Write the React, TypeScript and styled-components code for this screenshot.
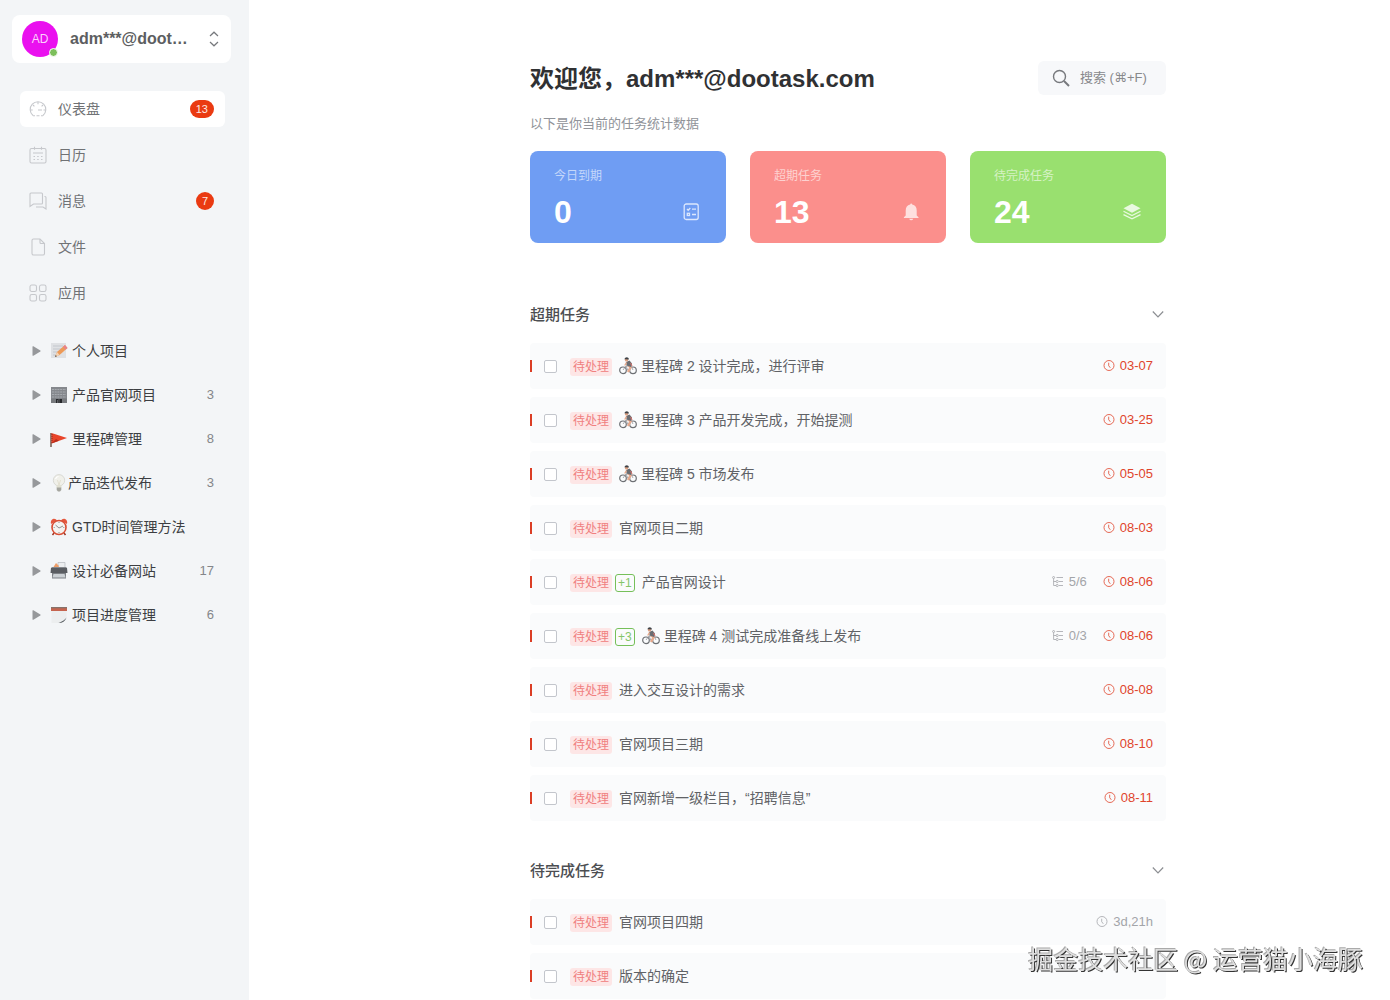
import React, { useState } from "react";
import styled, { createGlobalStyle } from "styled-components";

const Global = createGlobalStyle`
  * { box-sizing: border-box; }
  body {
    margin: 0;
    background: #fff;
    font-family: "Liberation Sans", "Noto Sans CJK SC", sans-serif;
    font-size: 14px;
    color: #606266;
  }
  button {
    font: inherit;
    color: inherit;
    border: 0;
    margin: 0;
    padding: 0;
    background: none;
    cursor: pointer;
    text-align: left;
  }
  a { color: inherit; text-decoration: none; }
  h1, h2, p, ul { margin: 0; padding: 0; }
  li { list-style: none; }
  svg { display: block; flex: none; }
`;

const Page = styled.div`
  display: flex;
  height: 100vh;
  overflow: hidden;
`;

const Sidebar = styled.aside`
  width: 249px;
  flex: none;
  background: #f3f5f7;
  overflow: hidden;
`;

const UserCard = styled.button`
  display: flex;
  align-items: center;
  width: 219px;
  height: 48px;
  margin: 15px 0 0 12px;
  padding: 0 12px 0 10px;
  border-radius: 8px;
  background: #fff;
`;

const Avatar = styled.span`
  position: relative;
  flex: none;
  width: 36px;
  height: 36px;
  border-radius: 50%;
  background: #ea10ef;
  color: #fbd0fc;
  font-size: 12px;
  line-height: 36px;
  text-align: center;
`;

const OnlineDot = styled.span`
  position: absolute;
  right: 0;
  bottom: 0;
  width: 9px;
  height: 9px;
  border: 1px solid #fff;
  border-radius: 50%;
  background: #7cbf5b;
`;

const UserName = styled.span`
  flex: 1;
  min-width: 0;
  margin: 0 20px 0 12px;
  font-size: 16px;
  line-height: 24px;
  font-weight: 700;
  color: #5c5e61;
  white-space: nowrap;
  overflow: hidden;
  text-overflow: ellipsis;
`;

const Menu = styled.ul`
  display: flex;
  flex-direction: column;
  gap: 10px;
  padding: 28px 24px 0 20px;
`;

const MenuLink = styled.a<{ $active?: boolean }>`
  display: flex;
  align-items: center;
  gap: 11px;
  height: 36px;
  padding: 0 11px 0 9px;
  border-radius: 6px;
  background: ${(p) => (p.$active ? "#fff" : "transparent")};
  color: #707275;
`;

const MenuLabel = styled.span`
  flex: 1;
  line-height: 20px;
`;

const Badge = styled.span`
  min-width: 18px;
  height: 18px;
  padding: 0 6px;
  border-radius: 9px;
  background: #ea3a12;
  color: #fde9e4;
  font-size: 11px;
  line-height: 18px;
  text-align: center;
`;

const Projects = styled.ul`
  padding: 18px 35px 0 32px;
`;

const ProjectButton = styled.button`
  display: flex;
  align-items: center;
  width: 100%;
  height: 44px;
  line-height: 20px;
  color: #3c3e42;
`;

const ProjectIcon = styled.span<{ $narrow?: boolean }>`
  width: ${(p) => (p.$narrow ? 18 : 22)}px;
  margin-left: 9px;
`;

const ProjectCount = styled.span`
  margin-left: auto;
  font-size: 13px;
  color: #84868a;
`;

const Main = styled.main`
  flex: 1;
  min-width: 0;
  display: grid;
  grid-template-columns: 281fr minmax(auto, 636px) 224fr;
  overflow: hidden;
`;

const Content = styled.div`
  grid-column: 2;
  padding-top: 61px;
`;

const Header = styled.header`
  display: flex;
  align-items: center;
  justify-content: space-between;
  height: 34px;
`;

const Title = styled.h1`
  font-size: 24px;
  line-height: 34px;
  padding-top: 2px;
  font-weight: 700;
  color: #303133;
`;

const SearchButton = styled.button`
  display: flex;
  align-items: center;
  gap: 10px;
  min-width: 128px;
  height: 34px;
  padding: 0 16px 0 14px;
  border-radius: 6px;
  background: #f7f8fa;
  font-family: "Liberation Sans", "DejaVu Sans", "Noto Sans CJK SC", sans-serif;
  font-size: 13px;
  line-height: 20px;
  color: #88898c;
`;

const Subtitle = styled.p`
  margin-top: 19px;
  font-size: 13px;
  line-height: 20px;
  color: #909399;
`;

const Stats = styled.div`
  display: grid;
  grid-template-columns: repeat(3, 1fr);
  gap: 24px;
  margin-top: 17px;
`;

const StatCard = styled.button<{ $color: string }>`
  display: flex;
  flex-direction: column;
  height: 92px;
  padding: 15px 25px 0 24px;
  border-radius: 8px;
  background: ${(p) => p.$color};
`;

const StatLabel = styled.span`
  font-size: 12px;
  line-height: 20px;
  color: rgba(255, 255, 255, 0.6);
`;

const StatRow = styled.span`
  display: flex;
  align-items: center;
  justify-content: space-between;
  width: 100%;
  margin-top: 8px;
`;

const StatValue = styled.strong`
  font-size: 32px;
  line-height: 36px;
  font-weight: 700;
  color: #fff;
`;

const Section = styled.section<{ $first?: boolean }>`
  margin-top: ${(p) => (p.$first ? 60 : 38)}px;
`;

const SectionHead = styled.button`
  display: flex;
  align-items: center;
  justify-content: space-between;
  width: 100%;
  height: 24px;
  padding-right: 2px;
`;

const SectionTitle = styled.span`
  font-size: 15px;
  line-height: 24px;
  font-weight: 500;
  color: #4c4e52;
`;

const TaskList = styled.ul`
  display: flex;
  flex-direction: column;
  gap: 8px;
  margin-top: 16px;
`;

const Task = styled.li`
  display: flex;
  align-items: center;
  height: 46px;
  padding-right: 13px;
  border-radius: 4px;
  background: #fafbfc;
`;

const Priority = styled.span`
  width: 2px;
  height: 12px;
  margin-right: 12px;
  background: #db3e25;
`;

const Check = styled.input`
  appearance: none;
  width: 13px;
  height: 13px;
  margin: 0 13px 0 0;
  border: 1px solid #c3c6cc;
  border-radius: 2px;
  background: #fff;
  &:checked { background: #84c56a; }
`;

const Status = styled.span`
  height: 18px;
  margin-top: 2px;
  padding: 0 3px;
  border-radius: 3px;
  background: #fde6e6;
  color: #f08080;
  font-size: 12px;
  line-height: 18px;
`;

const SubCount = styled.span`
  height: 18px;
  margin: 2px 0 0 3px;
  padding: 0 2px;
  border: 1px solid #76c05a;
  border-radius: 3px;
  color: #84c56a;
  font-size: 12px;
  line-height: 16px;
`;

const TaskName = styled.label`
  display: flex;
  align-items: center;
  gap: 4px;
  flex: 1;
  min-width: 0;
  margin-left: 7px;
  line-height: 20px;
  color: #606266;
`;

const Meta = styled.span<{ $late?: boolean }>`
  display: flex;
  align-items: center;
  gap: 5px;
  margin-left: 16px;
  font-size: 13px;
  line-height: 20px;
  color: ${(p) => (p.$late ? "#e0452c" : "#a3a5a9")};
`;

const Watermark = styled.div`
  position: fixed;
  right: 27px;
  bottom: 24px;
  font-family: "Noto Sans CJK SC", sans-serif;
  font-size: 25px;
  line-height: 36px;
  color: #dedede;
  text-shadow: 1px 1px 0 #333, -1px -1px 0 #aaa;
  pointer-events: none;
`;

const navIcons: Record<string, React.ReactNode> = {
  dash: (
    <>
      <path d="M4 15.5A7.8 7.8 0 1 1 14 15.5" />
      <path d="M4 15.8h2M7.5 15.8h3M12 15.8h2" />
      <path d="M9 10h4M9 2v2.2M4 5l1.4 1.4M14 5l-1.4 1.4M1.500 10h2.200M14.500 10h2" />
    </>
  ),
  calendar: (
    <>
      <rect x="1" y="2.5" width="16" height="14.5" rx="1.5" />
      <path d="M5.5 .8v3M12.5 .8v3M4 7h10" />
      <path d="M4.5 10.5H6M8.2 10.5h1.5M12 10.5h1.5M4.5 13.5H6M8.200 13.5h1.5M12 13.5h1.5" />
    </>
  ),
  chat: (
    <>
      <path d="M2 1h10.500q1 0 1 1v9q0 1-1 1H4.500L1 14.500V2q0-1 1-1z" />
      <path d="M15.5 4.500H16q1 0 1 1v11.500l-3-2H7" />
    </>
  ),
  file: (
    <>
      <path d="M4.500 1h6.500L15.500 5.500v10q0 1.500-1.500 1.500H4.500Q3 17 3 15.500v-13Q3 1 4.500 1z" />
      <path d="M11 1v3.500q0 1 1 1h3.500" />
    </>
  ),
  apps: (
    <>
      <rect x="1" y="1" width="6.500" height="6.500" rx="1.800" />
      <rect x="10.500" y="1" width="6.500" height="6.500" rx="1.800" />
      <rect x="1" y="10.500" width="6.500" height="6.500" rx="1.800" />
      <rect x="10.500" y="10.500" width="6.500" height="6.500" rx="1.800" />
    </>
  ),
};

const NavIcon = ({ name }: { name: string }) => (
  <svg width="18" height="18" viewBox="0 0 18 18" fill="none" stroke="#c6c8cc" strokeWidth="1.1">
    {navIcons[name]}
  </svg>
);

const emojis: Record<string, React.ReactNode> = {
  memo: (
    <>
      <path d="M1 1h15v15H1z" fill="#dfe1e4" />
      <path d="M3 4h10M3 7h9M3 10h5M3 13h4" stroke="#c3c7cd" />
      <path d="M5 15l2-5 8-7 2.5 3-8 7z" fill="#ed9a58" />
      <path d="M13 4.5l2-1.5 2.5 3-2 1.7z" fill="#e8838b" />
      <path d="M5 15l2-5 2.5 3z" fill="#f4d4b4" />
      <path d="M5 15l.8-2 1 1.2z" fill="#444" />
    </>
  ),
  office: (
    <>
      <path d="M1 1h16v16H1z" fill="#85888d" />
      <path d="M2 3.500h14M2 6h14M2 8.500h14M2 11h14" stroke="#a6aaaf" strokeDasharray="2 .7" />
      <path d="M1 12.500h16V17H1z" fill="#777a7e" />
      <path d="M6 13h6v4H6z" fill="#25272a" />
      <path d="M9 13v4M7.500 14v3" stroke="#85888d" strokeWidth=".6" />
    </>
  ),
  flag: (
    <>
      <path d="M1 3v14" stroke="#54301f" strokeWidth="1.2" />
      <path d="M1.5 3L17 8 1.5 13.500z" fill="#e8442a" />
      <path d="M2 4v9" stroke="#8d2d1d" strokeDasharray="1 1" />
      <path d="M1.5 13.500L9 10.800 6 9z" fill="#b72f1c" />
    </>
  ),
  bulb: (
    <>
      <circle cx="9" cy="6.300" r="5.700" fill="#f0f0ea" stroke="#cfcfc8" strokeWidth=".7" />
      <path d="M6.500 11h5v3h-5z" fill="#e1e0d2" />
      <path d="M6.700 13.500h4.600V16L10 17.500H8L6.700 16z" fill="#a5a69f" />
      <path d="M7.500 6L9 11l1.500-5" stroke="#d8d4bd" strokeWidth=".6" fill="none" />
      <path d="M5.500 5q1-2.500 3-2.500" stroke="#fff" strokeWidth="1.200" fill="none" />
    </>
  ),
  clock: (
    <>
      <path d="M4 15l-1.500 2M14 15l1.500 2" stroke="#9b3524" strokeWidth="1.500" />
      <path d="M1 6Q0 2 3.500.8 6 .5 7 2.500zM17 6Q18 2 14.500.8 12 .5 11 2.500z" fill="#e4573d" />
      <circle cx="9" cy="9.500" r="7" fill="#f4f3f0" stroke="#d94f35" strokeWidth="1.600" />
      <path d="M5.500 7L9 10l4-2" stroke="#777" strokeWidth=".8" fill="none" />
      <path d="M9 4v1M9 14v1M3.700 9.500h1M13.300 9.500h1" stroke="#777" strokeWidth=".8" />
    </>
  ),
  printer: (
    <>
      <path d="M8 .5h7v6H8z" fill="#eceef0" stroke="#b4b9be" strokeWidth=".7" />
      <path d="M3.500 5L6 1l3 3-1 2z" fill="#ee9d68" />
      <path d="M1 6h16l.5 5H.5z" fill="#5a5d62" />
      <path d="M1 6h16l-1-1H2z" fill="#85898e" />
      <path d="M2 11h14v5.500H2z" fill="#7d8186" />
      <path d="M3.500 12h11l1 3.500h-13z" fill="#ccd1d5" />
    </>
  ),
  notepad: (
    <>
      <path d="M1.500 1h15v12l-4 4h-11z" fill="#eceeef" />
      <path d="M1 1.500h16v3.500H1z" fill="#c5644f" />
      <path d="M1 1h16v1.300H1z" fill="#85736c" />
      <path d="M16.500 11.500q-2 3-8 5.500 6 0 8-5.500z" fill="#555b60" />
    </>
  ),
};

const Emoji = ({ name }: { name: string }) => (
  <svg width="18" height="18" viewBox="0 0 18 18">
    {emojis[name]}
  </svg>
);

const Cyclist = () => (
  <svg width="18" height="18" viewBox="0 0 18 18" fill="none">
    <circle cx="4" cy="13.300" r="3.300" stroke="#6d7074" strokeWidth="1.200" />
    <circle cx="14" cy="13.300" r="3.300" stroke="#6d7074" strokeWidth="1.200" />
    <path d="M4 13l3-4h5l2 4M7 9l2 4.500L12 9" stroke="#94979a" strokeWidth=".8" />
    <path d="M9 8.500l2.500 2-2.500 4.500" stroke="#e8a98c" strokeWidth="2.200" />
    <path d="M7 5l3.500-1.500 2.500 3-1 3.500-4.500-1.500z" fill="#6a6d72" />
    <path d="M7.500 5.500L5.800 8.500" stroke="#e8a98c" strokeWidth="1.500" />
    <path d="M11.500 6l1.500 3" stroke="#c96c68" strokeWidth="1.100" />
    <circle cx="7.500" cy="2.900" r="1.700" fill="#dda082" />
    <path d="M5.300 2.300Q6 .2 8 .3q2 .2 2 2.200z" fill="#3f4247" />
  </svg>
);

const Clock = () => (
  <svg width="12" height="12" viewBox="0 0 12 12" fill="none" stroke="currentColor" strokeWidth=".8">
    <circle cx="6" cy="5.500" r="5" />
    <path d="M5.700 2.700v3L7.300 7.800" />
  </svg>
);

const Tree = () => (
  <svg width="12" height="12" viewBox="0 0 12 12" fill="none" stroke="currentColor" strokeWidth=".8">
    <circle cx="1.600" cy="1.500" r="1" />
    <path d="M1.600 2.500v7h2.400M1.600 5.500H4M4.500 1.500H11M7 5.500h4M7 9.500h4" />
    <circle cx="5.200" cy="5.500" r="1.100" />
    <circle cx="5.200" cy="9.500" r="1.100" />
  </svg>
);

const Chevron = () => (
  <svg width="12" height="10" viewBox="0 0 12 10" fill="none" stroke="#8c8e92" strokeWidth="1.200">
    <path d="M.8 1.500L6 6.800l5.200-5.300" />
  </svg>
);

const menu = [
  { icon: "dash", label: "仪表盘", badge: 13 },
  { icon: "calendar", label: "日历" },
  { icon: "chat", label: "消息", badge: 7 },
  { icon: "file", label: "文件" },
  { icon: "apps", label: "应用" },
];

const projects = [
  { icon: "memo", label: "个人项目" },
  { icon: "office", label: "产品官网项目", count: 3 },
  { icon: "flag", label: "里程碑管理", count: 8 },
  { icon: "bulb", label: "产品迭代发布", count: 3 },
  { icon: "clock", label: "GTD时间管理方法" },
  { icon: "printer", label: "设计必备网站", count: 17 },
  { icon: "notepad", label: "项目进度管理", count: 6 },
];

const stats = [
  {
    label: "今日到期",
    value: 0,
    color: "#6f9df3",
    icon: (
      <svg width="18" height="18" viewBox="0 0 18 18" fill="none" stroke="#dce7fd" strokeWidth="1.300">
        <rect x="1.200" y="1" width="14" height="15.500" rx="2" />
        <path d="M4 6l1.200 1.200L7.300 5M9 6.200h4M9 11.500h4" />
        <rect x="4.300" y="10.300" width="2.200" height="2.200" />
      </svg>
    ),
  },
  {
    label: "超期任务",
    value: 13,
    color: "#fb8f8c",
    icon: (
      <svg width="18" height="18" viewBox="0 0 18 18" fill="#fee0df">
        <path d="M8.200.5q.9 0 1 1.100Q13.700 2.700 13.700 7.500v5l1.800 1.700v.8H.900v-.8l1.800-1.700v-5Q2.700 2.700 7.200 1.600q.1-1.100 1-1.100zM6.200 15.700h4q-.5 1.500-2 1.500t-2-1.500z" />
      </svg>
    ),
  },
  {
    label: "待完成任务",
    value: 24,
    color: "#99e06f",
    icon: (
      <svg width="18" height="18" viewBox="0 0 18 18" fill="none" stroke="#e9f9e0" strokeWidth="1.200">
        <path d="M9 .8l8.500 4.500L9 9.800.5 5.300z" fill="#e9f9e0" stroke="none" />
        <path d="M.5 8.300L9 12.500l8.500-4.200M.5 11.600L9 15.800l8.500-4.200" />
      </svg>
    ),
  },
];

type TaskItem = { name: string; due: string; late?: boolean; cyclist?: boolean; sub?: string; progress?: string };

const overdue: TaskItem[] = [
  { name: "里程碑 2 设计完成，进行评审", due: "03-07", late: true, cyclist: true },
  { name: "里程碑 3 产品开发完成，开始提测", due: "03-25", late: true, cyclist: true },
  { name: "里程碑 5 市场发布", due: "05-05", late: true, cyclist: true },
  { name: "官网项目二期", due: "08-03", late: true },
  { name: "产品官网设计", due: "08-06", late: true, sub: "+1", progress: "5/6" },
  { name: "里程碑 4 测试完成准备线上发布", due: "08-06", late: true, cyclist: true, sub: "+3", progress: "0/3" },
  { name: "进入交互设计的需求", due: "08-08", late: true },
  { name: "官网项目三期", due: "08-10", late: true },
  { name: "官网新增一级栏目，“招聘信息”", due: "08-11", late: true },
];

const pending: TaskItem[] = [
  { name: "官网项目四期", due: "3d,21h" },
  { name: "版本的确定", due: "" },
];

function TaskSection({ id, title, tasks, first }: { id: string; title: string; tasks: TaskItem[]; first?: boolean }) {
  const [open, setOpen] = useState(true);
  return (
    <Section $first={first}>
      <SectionHead aria-expanded={open} onClick={() => setOpen(!open)}>
        <SectionTitle>{title}</SectionTitle>
        <Chevron />
      </SectionHead>
      {open && (
        <TaskList>
          {tasks.map((t, i) => (
            <Task key={t.name}>
              <Priority />
              <Check type="checkbox" id={`${id}-${i}`} />
              <Status>待处理</Status>
              {t.sub && <SubCount>{t.sub}</SubCount>}
              <TaskName htmlFor={`${id}-${i}`}>
                {t.cyclist && <Cyclist />}
                {t.name}
              </TaskName>
              {t.progress && (
                <Meta>
                  <Tree />
                  {t.progress}
                </Meta>
              )}
              {t.due && (
                <Meta $late={t.late}>
                  <Clock />
                  {t.due}
                </Meta>
              )}
            </Task>
          ))}
        </TaskList>
      )}
    </Section>
  );
}

export default function App() {
  return (
    <>
      <Global />
      <Page>
        <Sidebar>
          <UserCard>
            <Avatar>
              AD
              <OnlineDot />
            </Avatar>
            <UserName>adm***@dootask.com</UserName>
            <svg width="10" height="16" viewBox="0 0 10 16" fill="none" stroke="#77797d" strokeWidth="1.200">
              <path d="M1 5l4-3.800L9 5M1 11l4 3.800L9 11" />
            </svg>
          </UserCard>
          <nav>
            <Menu>
              {menu.map((m, i) => (
                <li key={m.icon}>
                  <MenuLink href={`#${m.icon}`} $active={i === 0}>
                    <NavIcon name={m.icon} />
                    <MenuLabel>{m.label}</MenuLabel>
                    {m.badge && <Badge>{m.badge}</Badge>}
                  </MenuLink>
                </li>
              ))}
            </Menu>
            <Projects>
              {projects.map((p) => (
                <li key={p.icon}>
                  <ProjectButton>
                    <svg width="9" height="10" viewBox="0 0 9 10" fill="#96989b">
                      <path d="M.5.8Q.5-.2 1.400.3L8.300 4.400q.7.6 0 1.200L1.400 9.700Q.5 10.200.5 9.200z" />
                    </svg>
                    <ProjectIcon $narrow={p.icon === "bulb"}>
                      <Emoji name={p.icon} />
                    </ProjectIcon>
                    {p.label}
                    {p.count && <ProjectCount>{p.count}</ProjectCount>}
                  </ProjectButton>
                </li>
              ))}
            </Projects>
          </nav>
        </Sidebar>
        <Main>
          <Content>
            <Header>
              <Title>欢迎您，adm***@dootask.com</Title>
              <SearchButton>
                <svg width="18" height="18" viewBox="0 0 18 18" fill="none" stroke="#77797d" strokeWidth="1.400">
                  <circle cx="7.500" cy="7.500" r="6" />
                  <path d="M12 12l5 5" strokeWidth="1.900" />
                </svg>
                搜索 (⌘+F)
              </SearchButton>
            </Header>
            <Subtitle>以下是你当前的任务统计数据</Subtitle>
            <Stats>
              {stats.map((s) => (
                <StatCard key={s.label} $color={s.color}>
                  <StatLabel>{s.label}</StatLabel>
                  <StatRow>
                    <StatValue>{s.value}</StatValue>
                    {s.icon}
                  </StatRow>
                </StatCard>
              ))}
            </Stats>
            <TaskSection id="overdue" title="超期任务" tasks={overdue} first />
            <TaskSection id="pending" title="待完成任务" tasks={pending} />
          </Content>
        </Main>
      </Page>
      <Watermark>掘金技术社区 @ 运营猫小海豚</Watermark>
    </>
  );
}
